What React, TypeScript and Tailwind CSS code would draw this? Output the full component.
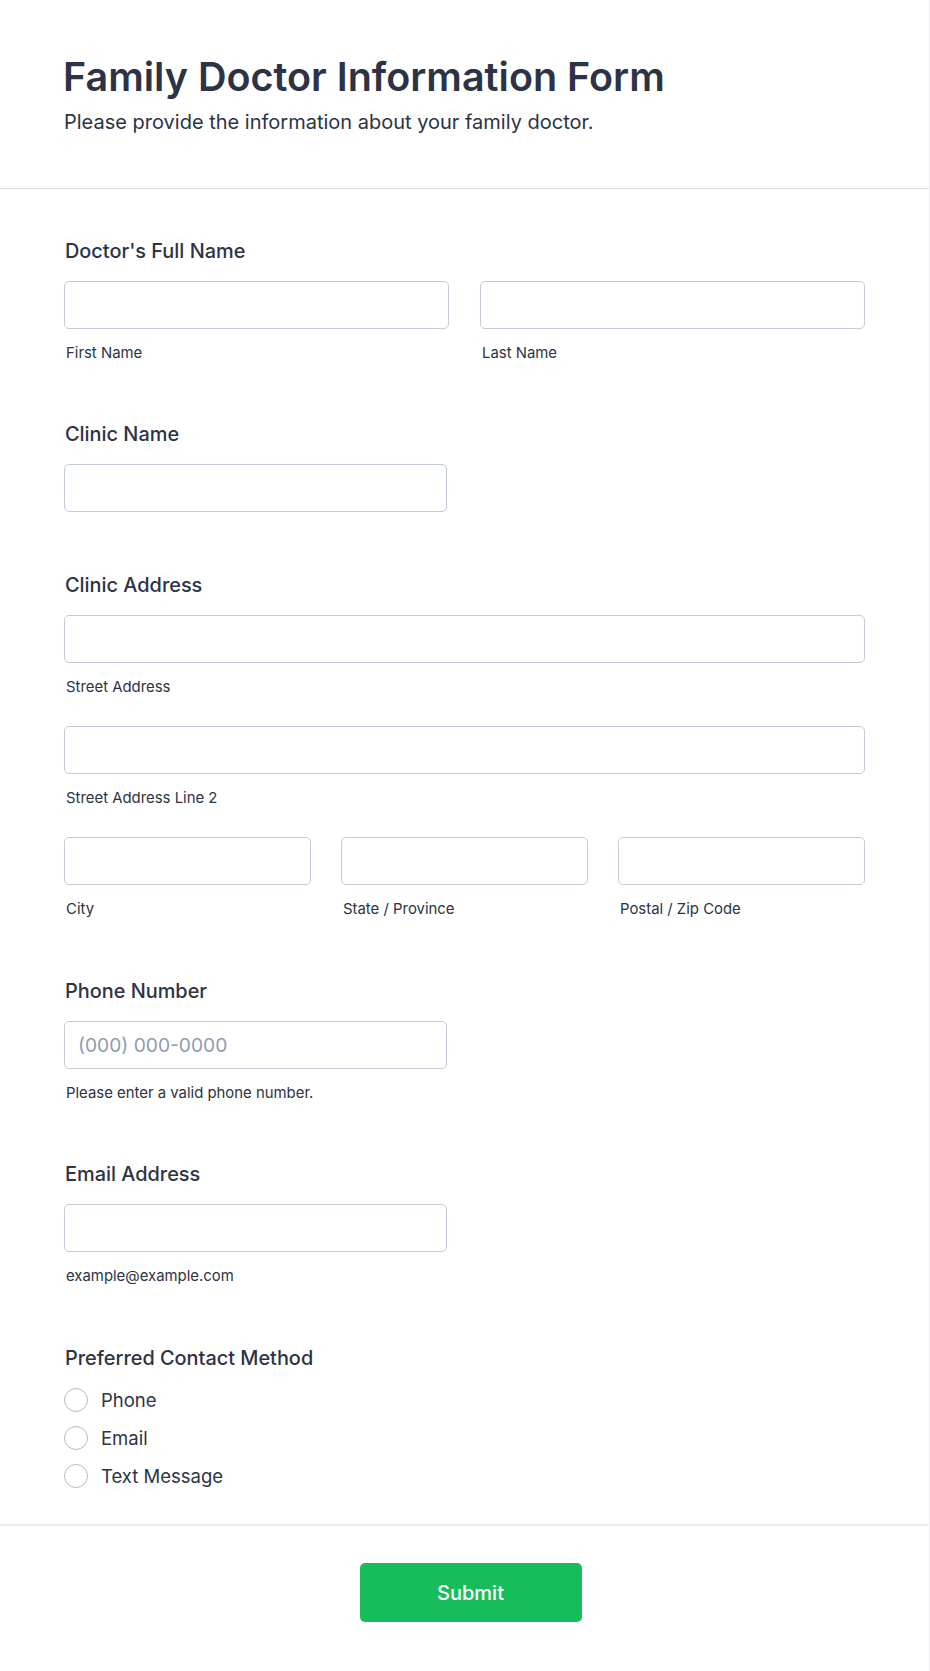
import React from 'react'

const Label = ({ children }: { children: React.ReactNode }) => (
  <div className="text-[19.9px] leading-[24px] font-medium text-[#2c3345] pl-[1px] mb-[18px]">{children}</div>
)

const Sub = ({ children }: { children: React.ReactNode }) => (
  <div className="mt-[14px] text-[14.9px] leading-[20px] text-[#2c3345] pl-[2px]">{children}</div>
)

const Input = ({ placeholder, className = '' }: { placeholder?: string; className?: string }) => (
  <input
    type="text"
    placeholder={placeholder}
    className={`h-[48px] w-full rounded-[5px] border border-[#c3cad8] bg-white px-[13px] text-[19.2px] text-[#2c3345] placeholder:text-[#8f9bb0] outline-none ${className}`}
  />
)

const Radio = ({ label }: { label: string }) => (
  <label className="flex items-center gap-[13px] h-[24px]">
    <span className="w-[24px] h-[24px] rounded-full border-[1.5px] border-[#b4bac8] bg-white shrink-0" />
    <span className="text-[18.5px] leading-[24px] text-[#2c3345]">{label}</span>
  </label>
)

export default function App() {
  return (
    <div className="min-h-screen bg-white font-['Inter',sans-serif] text-[#2c3345]">
      <div className="w-[930px] border-r border-b border-[#eeeef2] bg-white">
        {/* Header */}
        <div className="pt-[54px] pb-[53px] px-[63px] border-b border-[#d7dbe4]">
          <h1 className="text-[39.5px] leading-[47px] font-semibold text-[#2c3345]">
            Family Doctor Information Form
          </h1>
          <p className="mt-[9px] text-[20px] leading-[25px] text-[#2c3345] pl-[1px]">
            Please provide the information about your family doctor.
          </p>
        </div>

        {/* Fields */}
        <div className="px-[64px] pt-[50px]">
          <div>
            <Label>Doctor's Full Name</Label>
            <div className="grid grid-cols-2 gap-[31px] w-[801px]">
              <div>
                <Input />
                <Sub>First Name</Sub>
              </div>
              <div>
                <Input />
                <Sub>Last Name</Sub>
              </div>
            </div>
          </div>

          <div className="mt-[59px]">
            <Label>Clinic Name</Label>
            <div className="w-[383px]">
              <Input />
            </div>
          </div>

          <div className="mt-[61px] w-[801px]">
            <Label>Clinic Address</Label>
            <Input />
            <Sub>Street Address</Sub>
            <div className="mt-[29px]">
              <Input />
              <Sub>Street Address Line 2</Sub>
            </div>
            <div className="mt-[29px] grid grid-cols-3 gap-[30px]">
              <div>
                <Input />
                <Sub>City</Sub>
              </div>
              <div>
                <Input />
                <Sub>State / Province</Sub>
              </div>
              <div>
                <Input />
                <Sub>Postal / Zip Code</Sub>
              </div>
            </div>
          </div>

          <div className="mt-[60px]">
            <Label>Phone Number</Label>
            <div className="w-[383px]">
              <Input placeholder="(000) 000-0000" />
            </div>
            <Sub>Please enter a valid phone number.</Sub>
          </div>

          <div className="mt-[59px]">
            <Label>Email Address</Label>
            <div className="w-[383px]">
              <Input />
            </div>
            <Sub>example@example.com</Sub>
          </div>

          <div className="mt-[60px] pb-[36px]">
            <Label>Preferred Contact Method</Label>
            <div className="flex flex-col gap-[14px]">
              <Radio label="Phone" />
              <Radio label="Email" />
              <Radio label="Text Message" />
            </div>
          </div>
        </div>

        {/* Footer */}
        <div className="border-t-2 border-[#ececf2] pt-[37px] pb-[49px] pl-[12px] flex justify-center">
          <button className="w-[222px] h-[59px] rounded-[5px] bg-[#18bd5b] text-white text-[20px] font-medium">
            Submit
          </button>
        </div>
      </div>
    </div>
  )
}
